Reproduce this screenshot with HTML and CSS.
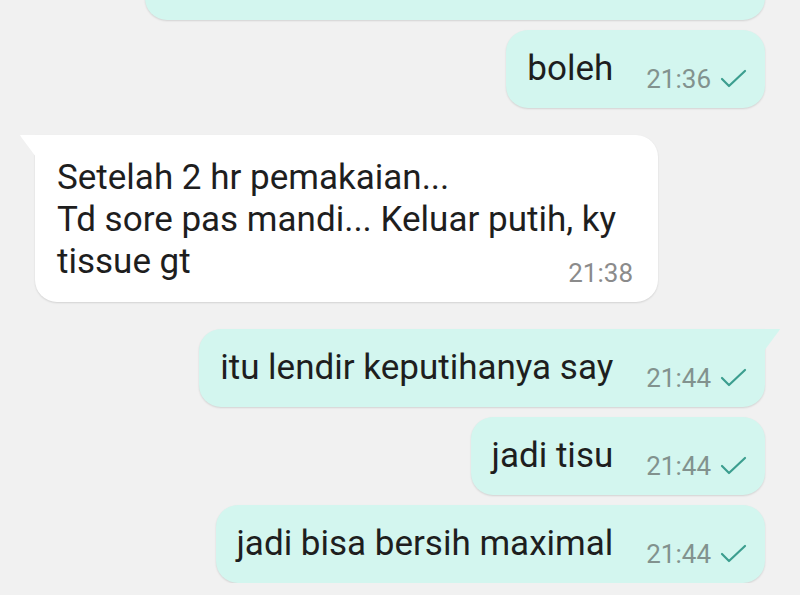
FILE: index.html
```html
<!DOCTYPE html>
<html lang="en">
<head>
  <meta charset="utf-8">
  <title>Chat</title>
  <link rel="stylesheet" href="styles.css">
</head>
<body>
  <div class="chat">
    <div class="row out">
      <div class="bubble bubble-out clipped"></div>
    </div>

    <div class="row out">
      <div class="bubble bubble-out">
        <span class="text">boleh</span>
        <span class="meta">21:36
          <svg class="tick" width="28" height="20" viewBox="0 0 28 20"><polyline points="2,10 9,17 25,2" /></svg>
        </span>
      </div>
    </div>

    <div class="row in first">
      <div class="bubble bubble-in tail-left">
        <div class="text">Setelah 2 hr pemakaian...<br>Td sore pas mandi... Keluar putih, ky<br>tissue gt</div>
        <div class="meta">21:38</div>
      </div>
    </div>

    <div class="row out first">
      <div class="bubble bubble-out tail-right">
        <span class="text">itu lendir keputihanya say</span>
        <span class="meta">21:44
          <svg class="tick" width="28" height="20" viewBox="0 0 28 20"><polyline points="2,10 9,17 25,2" /></svg>
        </span>
      </div>
    </div>

    <div class="row out">
      <div class="bubble bubble-out">
        <span class="text">jadi tisu</span>
        <span class="meta">21:44
          <svg class="tick" width="28" height="20" viewBox="0 0 28 20"><polyline points="2,10 9,17 25,2" /></svg>
        </span>
      </div>
    </div>

    <div class="row out">
      <div class="bubble bubble-out">
        <span class="text">jadi bisa bersih maximal</span>
        <span class="meta">21:44
          <svg class="tick" width="28" height="20" viewBox="0 0 28 20"><polyline points="2,10 9,17 25,2" /></svg>
        </span>
      </div>
    </div>
  </div>
</body>
</html>
```

FILE: styles.css
```css
body {
  margin: 0;
  background-color: #f1f1f1;
  font-family: Roboto, "Noto Sans", sans-serif;
  color: #1e1e1e;
  overflow: hidden;
}

.chat {
  display: flex;
  flex-direction: column;
  gap: 10px;
  padding: 0 35px;
}

.row {
  display: flex;
}
.row.out { justify-content: flex-end; }
.row.in { justify-content: flex-start; }
.row.first { margin-top: 17px; }

.bubble {
  position: relative;
  box-sizing: border-box;
  border-radius: 22px;
  box-shadow: 0 1px 2px rgba(0, 0, 0, 0.13);
}

.bubble-out {
  display: flex;
  align-items: flex-end;
  background-color: #d3f6ef;
  padding: 18px 17px 18px 21px;
}

.bubble-in {
  width: 623px;
  background-color: #ffffff;
  padding: 22px 25px 14px 22px;
}

.clipped {
  width: 620px;
  height: 60px;
  margin-top: -40px;
}

.text {
  font-size: 35px;
  line-height: 42px;
  white-space: nowrap;
}

.meta {
  display: flex;
  align-items: center;
  gap: 9px;
  font-size: 26px;
  line-height: 30px;
  color: #82928e;
}
.bubble-out .meta {
  margin-left: 33px;
  margin-bottom: -4px;
}
.bubble-in .meta {
  justify-content: flex-end;
  margin-top: -25px;
  color: #8b8b8b;
}

.tick {
  width: 28px;
  height: 20px;
}
.tick polyline {
  fill: none;
  stroke: #3c9e8f;
  stroke-width: 2.2;
  stroke-linecap: round;
  stroke-linejoin: round;
}

/* bubble tails */
.tail-left { border-top-left-radius: 0; }
.tail-left::before {
  content: "";
  position: absolute;
  top: 0;
  left: -15px;
  width: 16px;
  height: 22px;
  background-color: #ffffff;
  clip-path: polygon(0 0, 100% 0, 100% 100%, 6% 8%);
}

.tail-right { border-top-right-radius: 0; }
.tail-right::before {
  content: "";
  position: absolute;
  top: 0;
  right: -15px;
  width: 16px;
  height: 22px;
  background-color: #d3f6ef;
  clip-path: polygon(0 0, 100% 0, 94% 8%, 0 100%);
}
```
